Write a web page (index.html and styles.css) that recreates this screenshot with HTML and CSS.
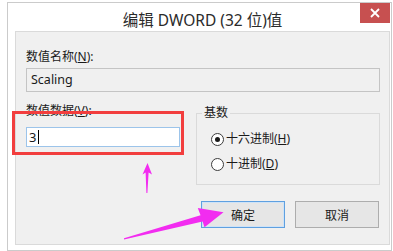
FILE: index.html
```html
<!DOCTYPE html>
<html lang="zh-CN">
<head>
  <meta charset="UTF-8">
  <title>编辑 DWORD (32 位)值</title>
  <link rel="stylesheet" href="styles.css">
</head>
<body>
<div class="window">
  <div class="titlebar">
    <span></span>
    <div class="title">编辑 DWORD (32 位)值</div>
    <button class="close" type="button" aria-label="关闭">
      <svg width="10" height="10" viewBox="0 0 10 10">
        <path d="M1 1 L9 9 M9 1 L1 9" stroke="#fff" stroke-width="1.8" fill="none"/>
      </svg>
    </button>
  </div>

  <div class="content">
    <label class="field-label" for="name">数值名称(<u>N</u>):</label>
    <div class="readonly-box" id="name">Scaling</div>

    <div class="row">
      <div class="data-col">
        <label class="field-label" for="data">数值数据(<u>V</u>):</label>
        <div class="edit-box" id="data">3<span class="caret"></span></div>
      </div>

      <fieldset class="base-group">
        <legend>基数</legend>
        <div class="radio-row">
          <span class="radio checked"></span>
          <span>十六进制(<u>H</u>)</span>
        </div>
        <div class="radio-row">
          <span class="radio"></span>
          <span>十进制(<u>D</u>)</span>
        </div>
      </fieldset>
    </div>

    <div class="buttons">
      <button class="btn btn-default" type="button">确定</button>
      <button class="btn" type="button">取消</button>
    </div>
  </div>
</div>

<!-- annotations drawn over the dialog -->
<div class="highlight"></div>
<svg class="arrows" width="393" height="251" viewBox="0 0 393 251">
  <polygon points="147.5,163 152,174.5 148.6,172.5 147.4,193 146.4,193 145.6,172.5 142.5,174.5" fill="#f22cf0"/>
  <polygon points="124,238.2 200.5,215.2 197.8,208 223.5,212.2 204.5,227.2 202.6,221.6 124,239.6" fill="#f22cf0"/>
</svg>
</body>
</html>
```

FILE: styles.css
```css
body {
  margin: 0;
  padding: 0;
  position: relative;
  width: 393px;
  height: 251px;
  background-color: #ffffff;
  font-family: "Noto Sans", "Noto Sans CJK SC", sans-serif;
  color: #1a1a1a;
  overflow: hidden;
}

.window {
  box-sizing: border-box;
  margin: 2px 0 0 7px;
  width: 385px;
  height: 249px;
  padding: 0 1px 5px 7px;
  border: 1px solid #cbcbcb;
  background-color: #ffffff;
  display: flex;
  flex-direction: column;
}

.titlebar {
  height: 28px;
  flex: none;
  display: grid;
  grid-template-columns: 1fr auto 1fr;
}

.title {
  padding-top: 7px;
  font-size: 15.5px;
  line-height: 20px;
  color: #2b2b2b;
  white-space: nowrap;
}

.close {
  justify-self: end;
  align-self: start;
  width: 30px;
  height: 20px;
  margin: 0;
  padding: 0;
  border: none;
  background-color: #c75050;
  display: flex;
  align-items: center;
  justify-content: center;
}

.content {
  box-sizing: border-box;
  flex: none;
  height: 214px;
  padding: 17px 9px 0 10px;
  border: 1px solid #dadada;
  background-color: #f0f0f0;
  font-size: 12px;
  line-height: 16px;
}

.field-label {
  display: block;
}

.readonly-box {
  box-sizing: border-box;
  height: 24px;
  margin-top: 3px;
  padding: 3px 4px;
  border: 1px solid #c4c4c4;
  background-color: #f0f0f0;
  font-size: 12.5px;
}

.row {
  display: flex;
  gap: 16px;
  margin-top: 11px;
}

.data-col {
  width: 154px;
}

.edit-box {
  box-sizing: border-box;
  height: 20px;
  margin-top: 8px;
  padding: 1px 2px;
  border: 1px solid #9cc4ea;
  background-color: #ffffff;
  font-size: 13px;
  display: flex;
  align-items: center;
}

.caret {
  display: inline-block;
  width: 1px;
  height: 14px;
  margin-left: 2px;
  background-color: #000000;
}

.base-group {
  box-sizing: border-box;
  width: 184px;
  margin: 2px 0 0 0;
  padding: 10px 6px 12px 5px;
  border: 1px solid #dadada;
  min-width: 0;
}

.base-group legend {
  padding: 0 2px;
}

.radio-row {
  display: flex;
  align-items: center;
  gap: 2px;
  margin-left: 9px;
  height: 16px;
}

.radio-row + .radio-row {
  margin-top: 9px;
}

.radio {
  box-sizing: border-box;
  width: 13px;
  height: 13px;
  border: 1px solid #3c3c3c;
  border-radius: 50%;
  background-color: #ffffff;
  display: flex;
  align-items: center;
  justify-content: center;
}

.radio.checked::after {
  content: "";
  width: 5px;
  height: 5px;
  border-radius: 50%;
  background-color: #1a1a1a;
}

.buttons {
  display: flex;
  justify-content: flex-end;
  gap: 10px;
  margin: 16px 1px 0 0;
}

.btn {
  box-sizing: border-box;
  width: 84px;
  height: 27px;
  margin: 0;
  padding: 0;
  border: 1px solid #adadad;
  background-color: #e6e6e6;
  font-family: inherit;
  font-size: 12px;
  font-weight: normal;
  color: #1a1a1a;
}

.btn-default {
  border-color: #5fa0e0;
  box-shadow: inset 0 0 0 1px #cfe3f7;
}

.highlight {
  position: absolute;
  left: 12px;
  top: 111px;
  width: 172px;
  height: 44px;
  box-sizing: border-box;
  border: 3px solid #f23e3e;
}

.arrows {
  position: absolute;
  left: 0;
  top: 0;
  pointer-events: none;
}
```
